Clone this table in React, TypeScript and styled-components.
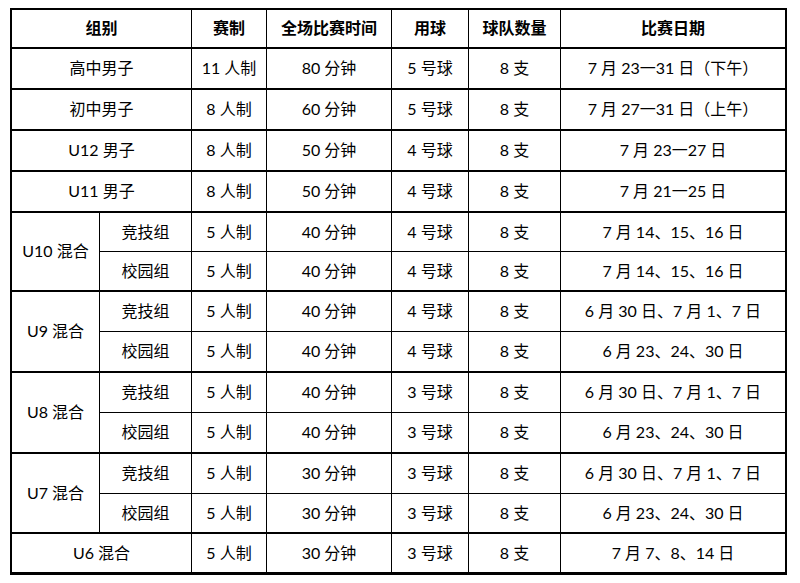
import { Fragment } from "react";
import styled, { createGlobalStyle } from "styled-components";

const GlobalStyle = createGlobalStyle`
  body {
    margin: 8px 0 0 10px;
    background: #fff;
    font-family: "Lato", "Noto Sans CJK SC", sans-serif;
    color: #000;
  }
`;

const Table = styled.div`
  width: 777px;
  box-sizing: border-box;
  border: 2px solid #000;
  display: grid;
  grid-template-columns: 88px 92px 75px 125px 77px 92px 224px;
  grid-template-rows: 39px repeat(4, 41px) 39px 40px 40px 41px 40px 41px 40px 40px 39px;
`;

const Cell = styled.div<{ $span?: number; $rows?: number; $thick?: boolean; $last?: boolean; $head?: boolean }>`
  box-sizing: border-box;
  display: flex;
  align-items: center;
  justify-content: center;
  font-size: 16px;
  line-height: 1;
  font-weight: ${(p) => (p.$head ? 700 : 400)};
  white-space: pre;
  border-right: ${(p) => (p.$last ? "none" : "1px solid #000")};
  border-bottom: ${(p) => (p.$thick ? "2px" : "1px")} solid #000;
  grid-column: ${(p) => (p.$span ? `span ${p.$span}` : "auto")};
  grid-row: ${(p) => (p.$rows ? `span ${p.$rows}` : "auto")};
  padding-bottom: 1px;
`;

const headers = ["组别", "赛制", "全场比赛时间", "用球", "球队数量", "比赛日期"];

type Line = [string, string, string, string, string];

type Group = {
  name: string;
  rows?: Line;
  subs?: [string, Line][];
};

const groups: Group[] = [
  { name: "高中男子", rows: ["11 人制", "80 分钟", "5 号球", "8 支", "7 月 23一31 日（下午）"] },
  { name: "初中男子", rows: ["8 人制", "60 分钟", "5 号球", "8 支", "7 月 27一31 日（上午）"] },
  { name: "U12 男子", rows: ["8 人制", "50 分钟", "4 号球", "8 支", "7 月 23一27 日"] },
  { name: "U11 男子", rows: ["8 人制", "50 分钟", "4 号球", "8 支", "7 月 21一25 日"] },
  {
    name: "U10 混合",
    subs: [
      ["竞技组", ["5 人制", "40 分钟", "4 号球", "8 支", "7 月 14、15、16 日"]],
      ["校园组", ["5 人制", "40 分钟", "4 号球", "8 支", "7 月 14、15、16 日"]],
    ],
  },
  {
    name: "U9 混合",
    subs: [
      ["竞技组", ["5 人制", "40 分钟", "4 号球", "8 支", "6 月 30 日、7 月 1、7 日"]],
      ["校园组", ["5 人制", "40 分钟", "4 号球", "8 支", "6 月 23、24、30 日"]],
    ],
  },
  {
    name: "U8 混合",
    subs: [
      ["竞技组", ["5 人制", "40 分钟", "3 号球", "8 支", "6 月 30 日、7 月 1、7 日"]],
      ["校园组", ["5 人制", "40 分钟", "3 号球", "8 支", "6 月 23、24、30 日"]],
    ],
  },
  {
    name: "U7 混合",
    subs: [
      ["竞技组", ["5 人制", "30 分钟", "3 号球", "8 支", "6 月 30 日、7 月 1、7 日"]],
      ["校园组", ["5 人制", "30 分钟", "3 号球", "8 支", "6 月 23、24、30 日"]],
    ],
  },
  { name: "U6 混合", rows: ["5 人制", "30 分钟", "3 号球", "8 支", "7 月 7、8、14 日"] },
];

const Values = ({ line, thick, last }: { line: Line; thick: boolean; last: boolean }) => (
  <>
    {line.map((v, i) => (
      <Cell key={i} $thick={thick && !last} $last={i === line.length - 1}>
        {v}
      </Cell>
    ))}
  </>
);

export default function App() {
  return (
    <>
      <GlobalStyle />
      <Table>
        {headers.map((h, i) => (
          <Cell key={h} $head $thick $span={i === 0 ? 2 : undefined} $last={i === headers.length - 1}>
            {h}
          </Cell>
        ))}
        {groups.map((g, gi) => {
          const last = gi === groups.length - 1;
          if (g.rows) {
            return (
              <Fragment key={g.name}>
                <Cell $span={2} $thick={!last}>
                  {g.name}
                </Cell>
                <Values line={g.rows} thick last={last} />
              </Fragment>
            );
          }
          return (
            <Fragment key={g.name}>
              <Cell $rows={2} $thick={!last}>
                {g.name}
              </Cell>
              {g.subs!.map(([sub, line], si) => (
                <Fragment key={sub}>
                  <Cell $thick={si === 1 && !last}>{sub}</Cell>
                  <Values line={line} thick={si === 1} last={last} />
                </Fragment>
              ))}
            </Fragment>
          );
        })}
      </Table>
    </>
  );
}
